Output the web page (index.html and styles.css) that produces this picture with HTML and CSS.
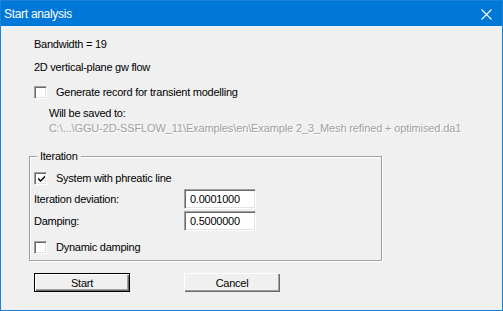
FILE: index.html
```html
<!DOCTYPE html>
<html lang="en">
  <head>
    <meta charset="UTF-8" />
    <meta name="viewport" content="width=device-width, initial-scale=1.0" />
    <title>Start analysis</title>
    <link rel="stylesheet" href="styles.css">
  </head>

  <body>
    <div class="window">
      <div class="titlebar">
        <span class="title">Start analysis</span>
        <svg class="close" width="11" height="11" viewBox="0 0 11 11">
          <path d="M0.5 0.5 L10.5 10.5 M10.5 0.5 L0.5 10.5" stroke="#fff" stroke-width="1.1" fill="none" />
        </svg>
      </div>

      <div class="content">
        <div class="row r-band">Bandwidth = 19</div>
        <div class="row r-flow">2D vertical-plane gw flow</div>

        <div class="row check r-gen">
          <span class="box"></span>
          <span>Generate record for transient modelling</span>
        </div>
        <div class="saveto">Will be saved to:</div>
        <div class="path">C:\...\GGU-2D-SSFLOW_11\Examples\en\Example 2_3_Mesh refined + optimised.da1</div>

        <div class="group">
          <div class="legend">Iteration</div>

          <div class="row check r-system">
            <span class="box">
              <svg width="9" height="9" viewBox="0 0 9 9">
                <path d="M1 3.5 L3.5 6 L8 1.5 L8 3.5 L3.5 8 L1 5.5 Z" fill="#000" />
              </svg>
            </span>
            <span>System with phreatic line</span>
          </div>

          <div class="row field r-dev">
            <span class="flabel">Iteration deviation:</span>
            <span class="edit">0.0001000</span>
          </div>

          <div class="row field r-damp">
            <span class="flabel">Damping:</span>
            <span class="edit">0.5000000</span>
          </div>

          <div class="row check r-dyn">
            <span class="box"></span>
            <span>Dynamic damping</span>
          </div>
        </div>

        <div class="buttons">
          <button class="btn default">Start</button>
          <button class="btn">Cancel</button>
        </div>
      </div>
    </div>
  </body>
</html>
```

FILE: styles.css
```css
      html, body {
        margin: 0;
        padding: 0;
      }

      body {
        font-family: "Liberation Sans", Arial, sans-serif;
        font-size: 11px;
        letter-spacing: -0.25px;
        color: #000;
        background: #f0f0f0;
      }

      div.window {
        width: 503px;
        height: 311px;
        box-sizing: border-box;
        border: 1px solid #1a82d8;
        background: #f0f0f0;
      }

      .titlebar {
        height: 25px;
        background: #0078d7;
        color: #fff;
        display: flex;
        align-items: center;
        justify-content: space-between;
        padding: 0 10px 0 3px;
      }

      .title {
        font-size: 12px;
        letter-spacing: -0.3px;
        margin-top: 1px;
      }

      .close {
        display: block;
        margin-top: 1px;
      }

      .content {
        padding-left: 33px;
      }

      .row {
        display: flex;
        align-items: center;
        height: 20px;
      }

      .r-band { margin-top: 8px; }
      .r-flow { margin-top: 3px; }
      .r-gen  { margin-top: 5px; }

      .check .box {
        width: 13px;
        height: 13px;
        box-sizing: border-box;
        background: #fff;
        border-top: 1px solid #a0a0a0;
        border-left: 1px solid #a0a0a0;
        border-right: 1px solid #fff;
        border-bottom: 1px solid #fff;
        box-shadow: inset 1px 1px 0 #696969, inset -1px -1px 0 #e3e3e3;
        margin-right: 9px;
        display: flex;
        align-items: center;
        justify-content: center;
      }

      .check .box svg {
        display: block;
        margin: 1px 0 0 1px;
      }

      .saveto {
        height: 14px;
        line-height: 14px;
        margin-top: 4px;
        padding-left: 15px;
      }

      .path {
        height: 14px;
        line-height: 14px;
        margin-top: 1px;
        padding-left: 15px;
        color: #a0a0a0;
        text-shadow: 1px 1px 0 #fff;
        white-space: nowrap;
        letter-spacing: -0.12px;
      }

      div.group {
        width: 353px;
        box-sizing: border-box;
        margin: 21px 0 0 -5px;
        padding: 0 0 6px 4px;
        border: 1px solid #a0a0a0;
        box-shadow: inset 1px 1px 0 #fff, 1px 1px 0 #fff;
      }

      .legend {
        width: max-content;
        height: 13px;
        line-height: 13px;
        margin: -7px 0 0 3px;
        padding: 0 3px;
        background: #f0f0f0;
      }

      .r-system { margin-top: 8px; height: 14px; }
      .r-dev    { margin-top: 4px; height: 19px; }
      .r-damp   { margin-top: 3px; height: 19px; }
      .r-dyn    { margin-top: 10px; height: 14px; }

      .flabel {
        width: 150px;
      }

      .edit {
        width: 72px;
        height: 20px;
        box-sizing: border-box;
        background: #fff;
        border-top: 1px solid #a0a0a0;
        border-left: 1px solid #a0a0a0;
        border-right: 1px solid #fff;
        border-bottom: 1px solid #fff;
        box-shadow: inset 1px 1px 0 #696969, inset -1px -1px 0 #e3e3e3;
        padding-left: 5px;
        line-height: 18px;
      }

      .buttons {
        display: flex;
        gap: 54px;
        margin-top: 12px;
      }

      .btn {
        width: 96px;
        height: 19px;
        padding: 0;
        border: none;
        background: #f0f0f0;
        font: inherit;
        letter-spacing: inherit;
        color: #000;
        box-shadow: inset 1px 1px 0 #fff, inset -1px -1px 0 #696969, inset -2px -2px 0 #a0a0a0;
      }

      .btn.default {
        box-shadow: inset 0 0 0 1px #000, inset 2px 2px 0 #fff, inset -2px -2px 0 #696969, inset -3px -3px 0 #a0a0a0;
      }
```
